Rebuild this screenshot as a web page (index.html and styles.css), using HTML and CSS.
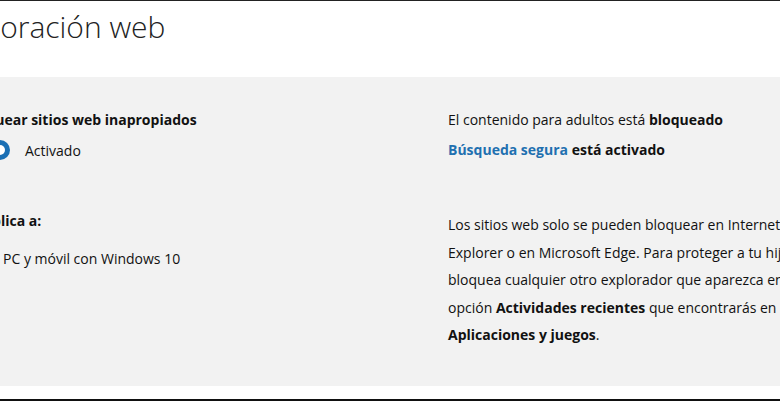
FILE: index.html
```html
<!DOCTYPE html>
<html lang="es">
<head>
    <meta charset="UTF-8">
    <meta name="viewport" content="width=device-width, initial-scale=1.0">
    <title>Exploración web</title>
    <link rel="stylesheet" href="styles.css">
</head>
<body>
    <div class="frame">
        <header class="title-bar">
            <h1 class="page-title">Exploración web</h1>
        </header>

        <section class="panel">
            <div class="col col-left">
                <h2 class="label">Bloquear sitios web inapropiados</h2>
                <div class="toggle-row">
                    <span class="toggle"><span class="knob"></span></span>
                    <span>Activado</span>
                </div>
                <h2 class="label applies">Se aplica a:</h2>
                <p class="device">PC y móvil con Windows 10</p>
            </div>

            <div class="col col-right">
                <p>El contenido para adultos está <b>bloqueado</b></p>
                <p><a class="link" href="#">Búsqueda segura</a> <b>está activado</b></p>
                <p class="note">Los sitios web solo se pueden bloquear en Internet Explorer o en Microsoft Edge. Para proteger a tu hijo, bloquea cualquier otro explorador que aparezca en la opción <b>Actividades recientes</b> que encontrarás en <b>Aplicaciones y juegos</b>.</p>
            </div>
        </section>

        <div class="bottom-strip"></div>
    </div>
</body>
</html>
```

FILE: styles.css
```css
html, body {
    margin: 0;
    padding: 0;
    overflow: hidden;
}

body {
    font-family: 'Open Sans', 'Noto Sans', sans-serif;
    font-size: 14px;
    color: #111;
    background: white;
}

.frame {
    width: 780px;
    height: 401px;
    overflow: hidden;
}

.title-bar {
    border-top: 1px solid #222;
    height: 77px;
    padding-top: 6px;
    box-sizing: border-box;
}

.page-title {
    margin: 0 0 0 -56px;
    font-size: 30px;
    font-weight: 300;
    line-height: 40px;
    color: #222;
    white-space: nowrap;
}

.panel {
    display: grid;
    grid-template-columns: 484px 380px;
    margin-left: -36px;
    height: 309px;
    padding-top: 28px;
    box-sizing: border-box;
    background: #f2f2f2;
}

.col p {
    margin: 0;
    line-height: 30px;
}

.label {
    margin: 0;
    font-size: 14px;
    font-weight: 700;
    line-height: 30px;
    white-space: nowrap;
}

.toggle-row {
    display: flex;
    align-items: center;
    gap: 15px;
    height: 30px;
}

.toggle {
    display: flex;
    align-items: center;
    justify-content: flex-end;
    width: 44px;
    height: 20px;
    margin-left: 2px;
    padding-right: 5px;
    box-sizing: border-box;
    border-radius: 10px;
    background: #1b6fb4;
}

.knob {
    width: 10px;
    height: 10px;
    border-radius: 50%;
    background: white;
}

.applies {
    margin-top: 41px;
}

.col .device {
    margin-top: 8px;
    padding-left: 39px;
    white-space: nowrap;
}

.col-right b {
    font-weight: 700;
}

.link {
    color: #1f70b0;
    font-weight: 700;
    text-decoration: none;
}

.col .note {
    margin-top: 46px;
    line-height: 27.5px;
    max-width: 370px;
}

.bottom-strip {
    height: 13px;
    border-bottom: 2px solid #111;
}
```
